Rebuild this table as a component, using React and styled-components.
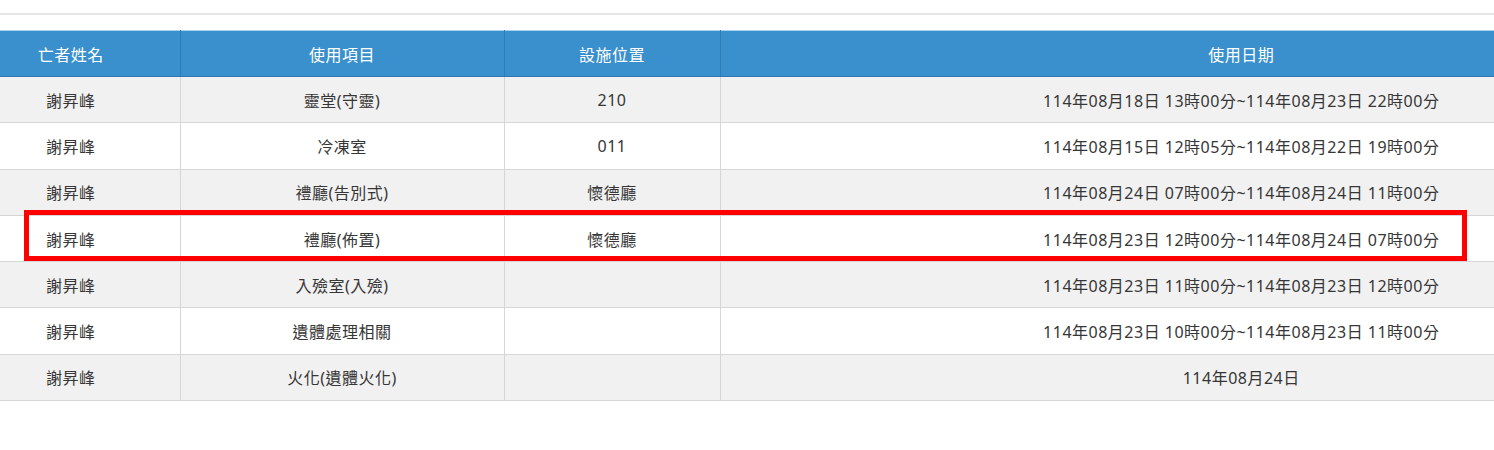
import styled, { createGlobalStyle } from "styled-components";

const GlobalStyle = createGlobalStyle`
  html, body {
    margin: 0;
    padding: 0;
    background: #fff;
  }
  body {
    font-family: "Noto Sans", "Noto Sans CJK TC", sans-serif;
    color: #363636;
  }
`;

const rows = [
  { name: "謝昇峰", item: "靈堂(守靈)", place: "210", date: "114年08月18日 13時00分~114年08月23日 22時00分" },
  { name: "謝昇峰", item: "冷凍室", place: "011", date: "114年08月15日 12時05分~114年08月22日 19時00分" },
  { name: "謝昇峰", item: "禮廳(告別式)", place: "懷德廳", date: "114年08月24日 07時00分~114年08月24日 11時00分" },
  { name: "謝昇峰", item: "禮廳(佈置)", place: "懷德廳", date: "114年08月23日 12時00分~114年08月24日 07時00分" },
  { name: "謝昇峰", item: "入殮室(入殮)", place: "", date: "114年08月23日 11時00分~114年08月23日 12時00分" },
  { name: "謝昇峰", item: "遺體處理相關", place: "", date: "114年08月23日 10時00分~114年08月23日 11時00分" },
  { name: "謝昇峰", item: "火化(遺體火化)", place: "", date: "114年08月24日" },
];

function App() {
  return (
    <Page>
      <GlobalStyle />
      <TopRule />
      <TableWrap>
        <Table>
          <colgroup>
            <col style={{ width: 218 }} />
            <col style={{ width: 324 }} />
            <col style={{ width: 216 }} />
            <col style={{ width: 1042 }} />
          </colgroup>
          <thead>
            <tr>
              <Th>亡者姓名</Th>
              <Th>使用項目</Th>
              <Th>設施位置</Th>
              <Th>使用日期</Th>
            </tr>
          </thead>
          <tbody>
            {rows.map((r, i) => (
              <Row key={i} $odd={i % 2 === 0}>
                <Td>{r.name}</Td>
                <Td>{r.item}</Td>
                <Td>{r.place}</Td>
                <Td>{r.date}</Td>
              </Row>
            ))}
          </tbody>
        </Table>
        <Highlight />
      </TableWrap>
    </Page>
  );
}

const Page = styled.div`
  width: 100%;
  overflow: hidden;
`;

const TopRule = styled.div`
  height: 13px;
  border-bottom: 2px solid #e6e6e6;
  margin-bottom: 15px;
`;

const TableWrap = styled.div`
  position: relative;
  height: 420px;
`;

const Table = styled.table`
  border-collapse: collapse;
  table-layout: fixed;
  width: 1800px;
  margin-left: -38px;
  border-top: 1px solid #a9d2ee;
  font-size: 16px;
  letter-spacing: 0.5px;
`;

const Th = styled.th`
  background: #3a8fcd;
  color: #fff;
  font-weight: normal;
  height: 45px;
  padding: 0;
  text-align: center;
  border-left: 1px solid #2f7cb4;
  border-bottom: 1px solid #2f78ad;
  &:first-child {
    border-left: none;
  }
`;

const Row = styled.tr`
  background: ${(p) => (p.$odd ? "#f1f1f1" : "#fff")};
`;

const Td = styled.td`
  height: 45.3px;
  padding: 0;
  text-align: center;
  border-left: 1px solid #d6d6d6;
  border-bottom: 1px solid #d6d6d6;
  white-space: nowrap;
  &:first-child {
    border-left: none;
  }
`;

const Highlight = styled.div`
  position: absolute;
  left: 24px;
  top: 180px;
  width: 1443px;
  height: 51px;
  box-sizing: border-box;
  border: 5px solid #ff0000;
  pointer-events: none;
`;

export default App;
